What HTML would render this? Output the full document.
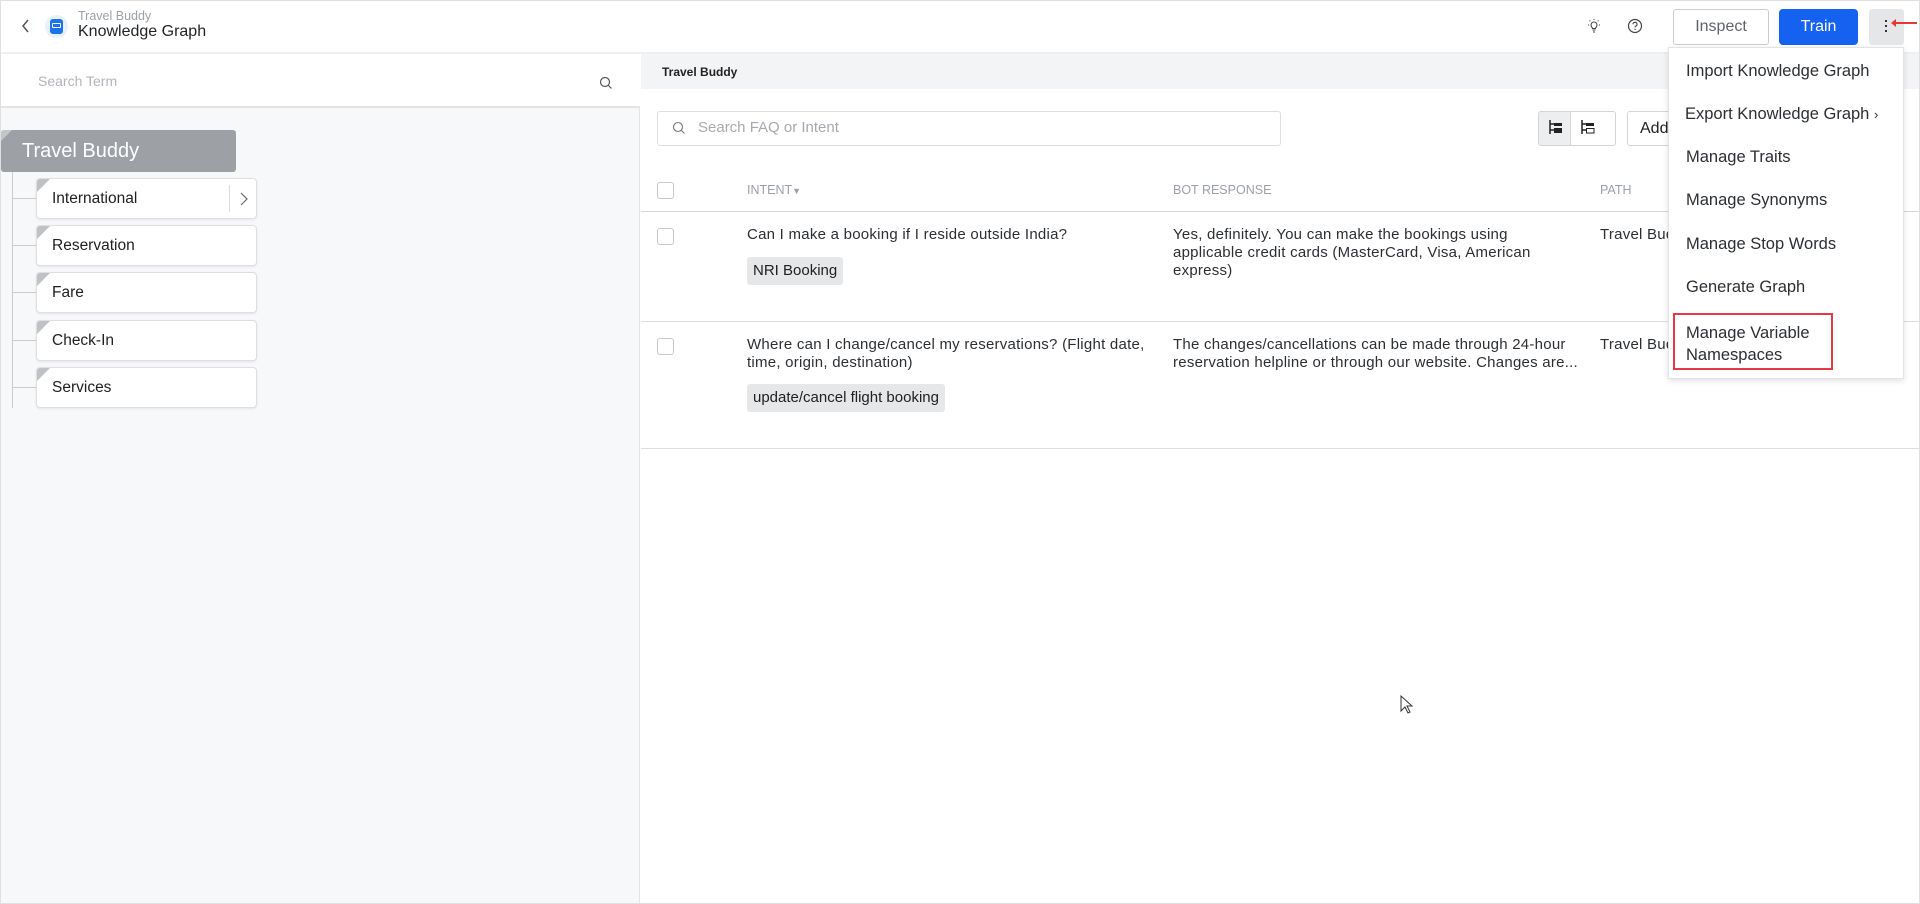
<!DOCTYPE html>
<html><head><meta charset="utf-8"><style>
*{box-sizing:border-box;margin:0;padding:0}
body{width:1920px;height:904px;overflow:hidden;font-family:"Liberation Sans",sans-serif;color:#202124;background:#fff;position:relative}
.abs{position:absolute}
.frame{position:absolute;left:0;top:0;width:1920px;height:904px;border:1px solid #e0e0e0;pointer-events:none}
.hdr{left:0;top:0;width:1920px;height:54px;background:#fff;border-bottom:2px solid #eeeff1}
.left{left:0;top:54px;width:640px;height:850px;background:#f7f8fa;border-right:1px solid #e3e4e6}
.lsearch{left:0;top:54px;width:640px;height:54px;background:#fff;border-bottom:2px solid #e2e3e5}
.node{position:absolute;left:36px;width:221px;height:41px;background:#fff;border:1px solid #dedfe2;border-radius:4px;box-shadow:0 1px 2px rgba(0,0,0,.08);font-size:15.5px;line-height:39px;padding-left:15px;overflow:hidden}
.node:before{content:"";position:absolute;left:0;top:0;border-top:13px solid #bfc1c5;border-right:13px solid transparent}
.br{position:absolute;left:12px;width:24px;height:1px;background:#c9cbce}
.menu{left:1668px;top:47px;width:236px;height:332px;background:#fff;border:1px solid #e2e3e5;box-shadow:0 2px 6px rgba(0,0,0,.12)}
.mi{position:absolute;left:17px;font-size:16.5px;color:#2b2f33}
.th{font-size:12.5px;color:#9aa0a6;top:183px}
.cb{position:absolute;left:657px;width:17px;height:17px;border:1px solid #c6c8cc;border-radius:3px;background:#fff}
.tag{position:absolute;left:747px;height:28px;line-height:28px;padding:0 6px;background:#e6e7e9;border-radius:3px;font-size:15px}
.t{font-size:15px;line-height:18px;color:#2b2f33;letter-spacing:.25px}
</style></head><body>
<div class="abs hdr"></div>
<svg class="abs" style="left:21px;top:18px" width="10" height="16"><path d="M7 2 L2 8 L7 14" fill="none" stroke="#555" stroke-width="1.5"/></svg>
<div class="abs" style="left:45px;top:15px;width:23px;height:23px;border-radius:50%;background:#e8f0fb"></div>
<div class="abs" style="left:50px;top:19px;width:13px;height:15px;border-radius:3px;background:#1a73e8"></div>
<div class="abs" style="left:52px;top:23px;width:9px;height:5px;border:1px solid #fff;border-radius:1px"></div>
<div class="abs" style="left:78px;top:9px;font-size:12.5px;color:#9aa0a6">Travel Buddy</div>
<div class="abs" style="left:78px;top:23px;font-size:16px;color:#1f2327">Knowledge Graph</div>
<svg class="abs" style="left:1584px;top:16px" width="20" height="20"><path d="M7 9a3 3 0 1 1 6 0c0 1.5-1.2 2.2-1.5 3.5h-3C8.2 11.2 7 10.5 7 9z M8.5 14h3 M9 16h2" fill="none" stroke="#444" stroke-width="1.1"/><path d="M10 3v1 M4 9h1 M15 9h1 M5.5 4.5l.8.8 M14.5 4.5l-.8.8" stroke="#444" stroke-width="1"/></svg>
<svg class="abs" style="left:1625px;top:16px" width="20" height="20"><circle cx="10" cy="10" r="6.5" fill="none" stroke="#444" stroke-width="1.2"/><path d="M8 8.3a2 2 0 1 1 2.6 1.9c-.5.2-.6.6-.6 1.2" fill="none" stroke="#444" stroke-width="1.1"/><circle cx="10" cy="13.3" r=".7" fill="#444"/></svg>
<div class="abs" style="left:1673px;top:9px;width:96px;height:36px;border:1px solid #c9ccd0;border-radius:3px;text-align:center;line-height:34px;font-size:16px;color:#5f6368">Inspect</div>
<div class="abs" style="left:1779px;top:9px;width:79px;height:36px;background:#1662f0;border-radius:4px;text-align:center;line-height:36px;font-size:16px;color:#fff">Train</div>
<div class="abs" style="left:1869px;top:9px;width:35px;height:36px;background:#e5e6e8;border-radius:3px"></div>
<div class="abs" style="left:1885px;top:20px;width:2px;height:2px;background:#333;box-shadow:0 5px 0 #333,0 10px 0 #333"></div>
<svg class="abs" style="left:1890px;top:17px" width="28" height="12"><path d="M27 6H4" stroke="#e53935" stroke-width="2"/><path d="M1 6l5-4v8z" fill="#e53935"/></svg>

<div class="abs left"></div>
<div class="abs lsearch"></div>
<div class="abs" style="left:38px;top:73px;font-size:14px;color:#b0b4b9">Search Term</div>
<svg class="abs" style="left:599px;top:76px" width="14" height="14"><circle cx="6" cy="6" r="4.5" fill="none" stroke="#555" stroke-width="1.2"/><path d="M9.5 9.5l3 3" stroke="#555" stroke-width="1.2"/></svg>
<div class="abs" style="left:1px;top:130px;width:235px;height:42px;background:#9da0a5;border-radius:3px;color:#fff;font-size:20px;line-height:42px;padding-left:21px;overflow:hidden"><span style="position:absolute;left:0;top:0;border-top:11px solid #c4c6c9;border-right:11px solid transparent"></span>Travel Buddy</div>
<div class="abs" style="left:12px;top:172px;width:1px;height:236px;background:#c9cbce"></div>
<div class="br" style="top:198px"></div><div class="br" style="top:245px"></div><div class="br" style="top:292px"></div><div class="br" style="top:340px"></div><div class="br" style="top:387px"></div>
<div class="node" style="top:178px">International<span style="position:absolute;left:192px;top:6px;width:1px;height:27px;background:#ddd"></span><svg style="position:absolute;left:202px;top:13px" width="10" height="14"><path d="M2 1l6 6-6 6" fill="none" stroke="#666" stroke-width="1.2"/></svg></div>
<div class="node" style="top:225px">Reservation</div>
<div class="node" style="top:272px">Fare</div>
<div class="node" style="top:320px">Check-In</div>
<div class="node" style="top:367px">Services</div>

<div class="abs" style="left:641px;top:54px;width:1279px;height:35px;background:#f3f4f6"></div>
<div class="abs" style="left:662px;top:65px;font-size:12px;font-weight:bold;color:#222">Travel Buddy</div>
<div class="abs" style="left:657px;top:111px;width:624px;height:35px;border:1px solid #dcdee1;border-radius:3px"></div>
<svg class="abs" style="left:672px;top:121px" width="14" height="14"><circle cx="6" cy="6" r="4.5" fill="none" stroke="#777" stroke-width="1.1"/><path d="M9.5 9.5l3 3" stroke="#777" stroke-width="1.1"/></svg>
<div class="abs" style="left:698px;top:119px;font-size:15px;color:#a5a9ae">Search FAQ or Intent</div>
<div class="abs" style="left:1538px;top:111px;width:78px;height:35px;border:1px solid #d2d4d7;border-radius:3px;overflow:hidden"><div style="width:32px;height:35px;background:#eceef0;border-right:1px solid #d2d4d7"></div></div>
<svg class="abs" style="left:1547px;top:118px" width="18" height="18"><path d="M3 2v14M3 6h4M3 12h4" stroke="#222" stroke-width="1.5" fill="none"/><rect x="7" y="5" width="8" height="3" fill="#222"/><rect x="7" y="10" width="8" height="5" fill="#222"/></svg>
<svg class="abs" style="left:1579px;top:118px" width="18" height="18"><path d="M3 2v14M3 6h4M3 12h4" stroke="#222" stroke-width="1.5" fill="none"/><rect x="7" y="5" width="8" height="3" fill="#222"/><rect x="7.5" y="10.5" width="7.5" height="4.5" fill="none" stroke="#222"/></svg>
<div class="abs" style="left:1627px;top:111px;width:60px;height:35px;border:1px solid #d2d4d7;border-radius:3px;font-size:16px;line-height:33px;padding-left:12px">Add</div>

<div class="cb" style="top:182px"></div>
<div class="abs th" style="left:747px">INTENT<span style="font-size:9px">&#9660;</span></div>
<div class="abs th" style="left:1173px">BOT RESPONSE</div>
<div class="abs th" style="left:1600px">PATH</div>
<div class="abs" style="left:641px;top:211px;width:1279px;height:1px;background:#d5d7da"></div>
<div class="cb" style="top:228px"></div>
<div class="abs t" style="left:747px;top:226px">Can I make a booking if I reside outside India?</div>
<div class="tag" style="top:257px">NRI Booking</div>
<div class="abs t" style="left:1173px;top:226px;width:395px">Yes, definitely. You can make the bookings using applicable credit cards (MasterCard, Visa, American express)</div>
<div class="abs t" style="left:1600px;top:226px">Travel Bud</div>
<div class="abs" style="left:641px;top:321px;width:1279px;height:1px;background:#dcdee1"></div>
<div class="cb" style="top:338px"></div>
<div class="abs t" style="left:747px;top:336px;width:410px">Where can I change/cancel my reservations? (Flight date, time, origin, destination)</div>
<div class="tag" style="top:384px">update/cancel flight booking</div>
<div class="abs t" style="left:1173px;top:336px;width:405px">The changes/cancellations can be made through 24-hour reservation helpline or through our website. Changes are...</div>
<div class="abs t" style="left:1600px;top:336px">Travel Bud</div>
<div class="abs" style="left:641px;top:448px;width:1279px;height:1px;background:#dcdee1"></div>

<div class="abs menu">
<div class="mi" style="top:14px">Import Knowledge Graph</div>
<div class="mi" style="top:57px;left:16px">Export Knowledge Graph <span style="font-size:13px">&#8250;</span></div>
<div class="mi" style="top:100px">Manage Traits</div>
<div class="mi" style="top:143px">Manage Synonyms</div>
<div class="mi" style="top:187px">Manage Stop Words</div>
<div class="mi" style="top:230px">Generate Graph</div>
<div class="mi" style="top:274px;line-height:22px">Manage Variable<br>Namespaces</div>
<div style="position:absolute;left:4px;top:265px;width:160px;height:57px;border:2px solid #e53945"></div>
</div>
<svg class="abs" style="left:1400px;top:695px" width="14" height="20"><path d="M1 1v15l4-4 3 6 2-1-3-6h5z" fill="#fff" stroke="#333" stroke-width="1"/></svg>
<div class="frame"></div>
</body></html>
